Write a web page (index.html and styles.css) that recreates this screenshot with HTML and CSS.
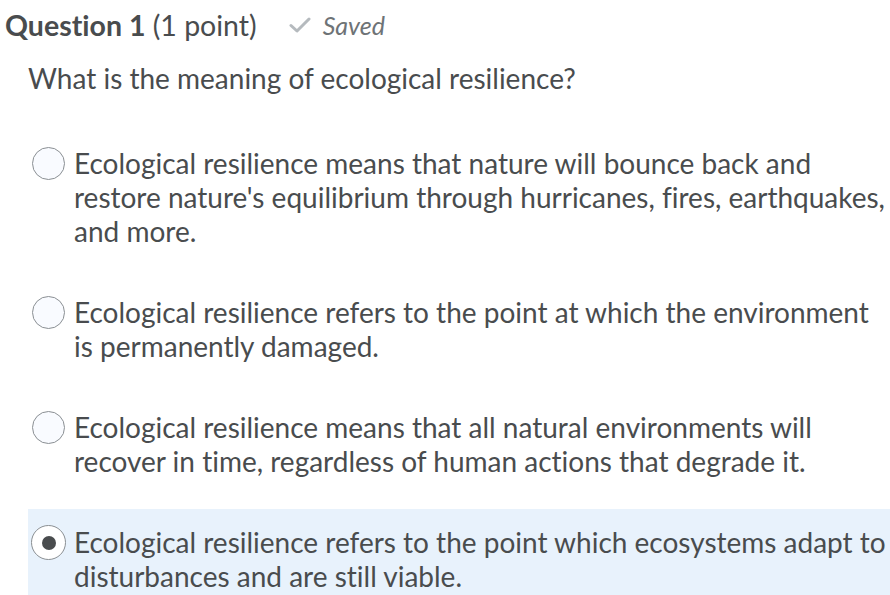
FILE: index.html
```html
<!DOCTYPE html>
<html>
<head>
<meta charset="utf-8">
<link rel="stylesheet" href="styles.css">
</head>
<body>
<div class="question">
  <div class="header">
    <h2 class="title"><strong>Question 1</strong> (1 point)</h2>
    <span class="saved">
      <svg class="check" width="22" height="18" viewBox="0 0 22 18"><path d="M2 9.5 L8 15 L20 3" fill="none" stroke="#b5babe" stroke-width="3" stroke-linecap="round" stroke-linejoin="round"/></svg>
      <em>Saved</em>
    </span>
  </div>
  <p class="prompt">What is the meaning of ecological resilience?</p>
  <div class="options">
    <label class="option">
      <span class="radio"></span>
      <span class="text">Ecological resilience means that nature will bounce back and restore nature's equilibrium through hurricanes, fires, earthquakes, and more.</span>
    </label>
    <label class="option">
      <span class="radio"></span>
      <span class="text">Ecological resilience refers to the point at which the environment is permanently damaged.</span>
    </label>
    <label class="option">
      <span class="radio"></span>
      <span class="text">Ecological resilience means that all natural environments will recover in time, regardless of human actions that degrade it.</span>
    </label>
    <label class="option selected">
      <span class="radio checked"></span>
      <span class="text">Ecological resilience refers to the point which ecosystems adapt to disturbances and are still viable.</span>
    </label>
  </div>
</div>
</body>
</html>
```
FILE: styles.css
```css
html, body {
  margin: 0;
  padding: 0;
  background: #ffffff;
}
body {
  font-family: Lato, "Open Sans", sans-serif;
  color: #494c4e;
  font-variant-ligatures: none;
}
.question {
  padding: 9px 0 0 5px;
}
.header {
  display: flex;
  align-items: center;
  gap: 32px;
}
.title {
  margin: 0;
  font-size: 28.5px;
  font-weight: 400;
  line-height: 32px;
}
.title strong {
  font-weight: 700;
}
.saved {
  display: flex;
  align-items: center;
  gap: 12px;
  color: #6e7376;
  font-size: 25px;
}
.saved em {
  font-style: italic;
}
.prompt {
  margin: 20px 0 0 23px;
  font-size: 28px;
  line-height: 34px;
}
.options {
  margin: 51px 0 0 23px;
  display: flex;
  flex-direction: column;
  gap: 47px;
}
.option {
  display: flex;
  align-items: flex-start;
  gap: 9px;
  padding: 0 2px 0 4px;
  font-size: 28px;
  line-height: 34px;
}
.option.selected {
  background: #e8f2fc;
  padding-top: 16px;
  padding-bottom: 16px;
  margin-top: -16px;
}
.radio {
  flex: none;
  width: 33px;
  height: 33px;
  margin-top: 1px;
  border: 1px solid #8a8f93;
  border-radius: 50%;
  background: #f9fbff;
  box-sizing: border-box;
  position: relative;
}
.radio.checked {
  background: #ffffff;
  width: 35px;
  height: 35px;
  margin-left: -1px;
  margin-right: -1px;
  margin-top: 0;
}
.radio.checked::after {
  content: "";
  position: absolute;
  left: 50%;
  top: 50%;
  width: 14px;
  height: 14px;
  margin: -7px 0 0 -7px;
  border-radius: 50%;
  background: #494c4e;
}
.text {
  flex: 1;
}
```
